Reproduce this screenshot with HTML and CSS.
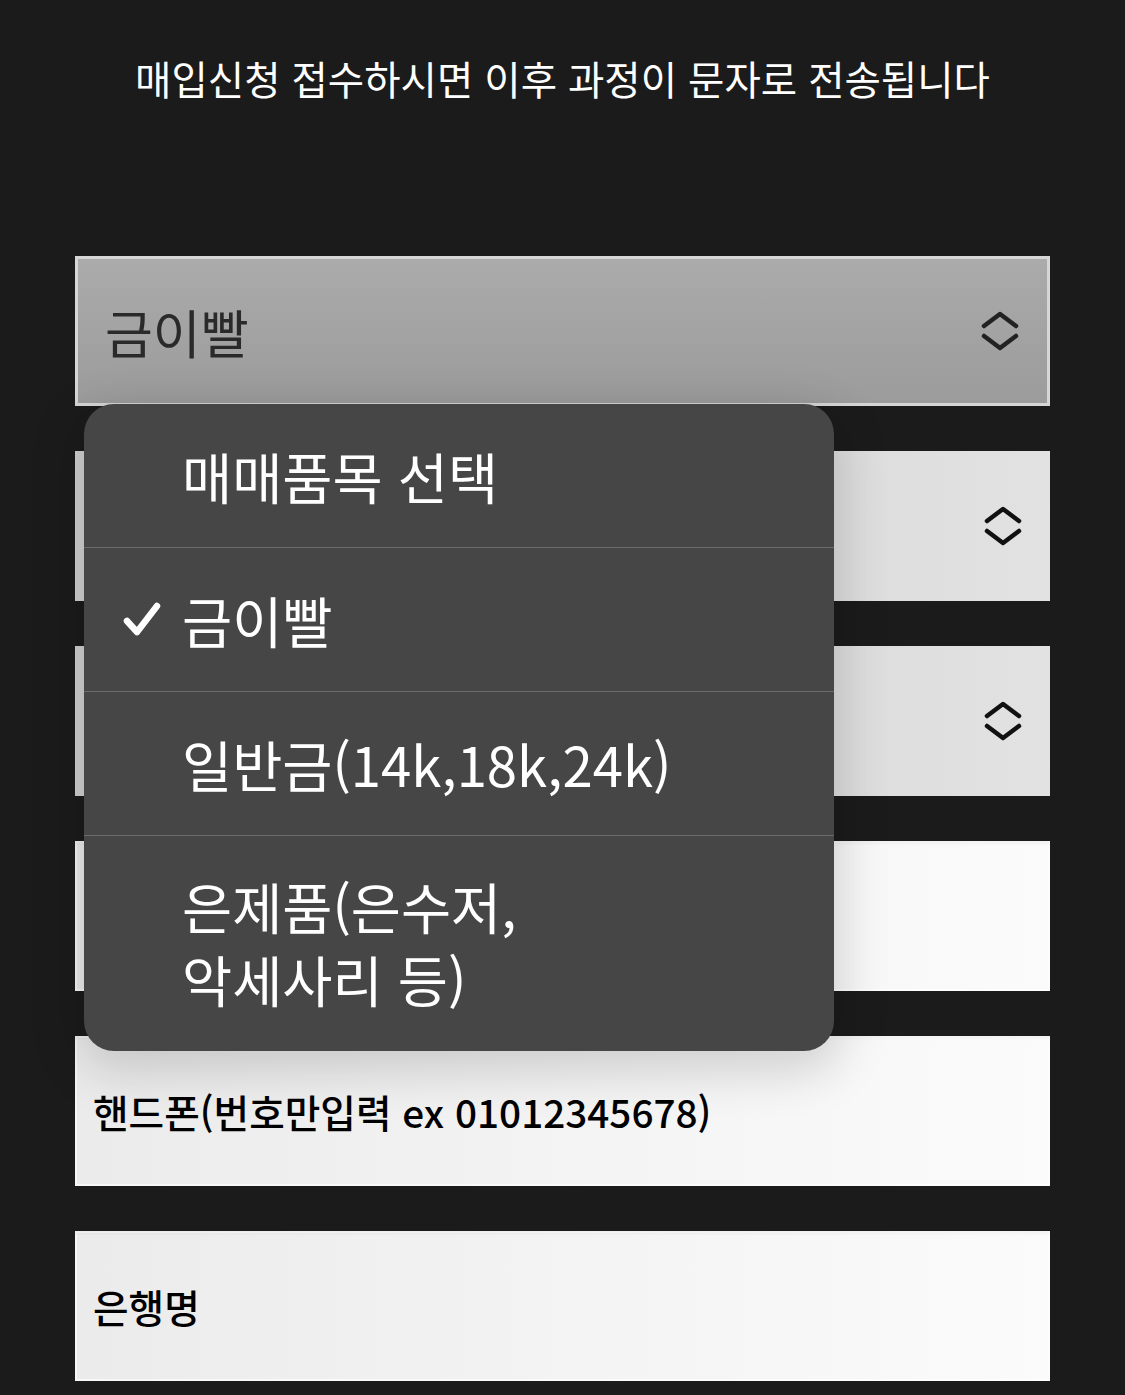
FILE: index.html
```html
<!DOCTYPE html>
<html lang="ko">
<head>
<meta charset="utf-8">
<title>매입신청</title>
<link rel="stylesheet" href="styles.css">
</head>
<body>
<div class="page">
  <p class="notice">매입신청 접수하시면 이후 과정이 문자로 전송됩니다</p>
  <form class="form">
    <div class="field select active">
      <span class="value">금이빨</span>
      <svg class="chev" viewBox="0 0 40 44" width="40" height="44"><path d="M4 17 L20 5 L36 17 M4 27 L20 39 L36 27" fill="none" stroke="#222" stroke-width="4.5" stroke-linecap="round" stroke-linejoin="round"/></svg>
    </div>
    <div class="field select">
      <span class="value"></span>
      <svg class="chev" viewBox="0 0 40 44" width="40" height="44"><path d="M4 17 L20 5 L36 17 M4 27 L20 39 L36 27" fill="none" stroke="#111" stroke-width="4.5" stroke-linecap="round" stroke-linejoin="round"/></svg>
    </div>
    <div class="field select">
      <span class="value"></span>
      <svg class="chev" viewBox="0 0 40 44" width="40" height="44"><path d="M4 17 L20 5 L36 17 M4 27 L20 39 L36 27" fill="none" stroke="#111" stroke-width="4.5" stroke-linecap="round" stroke-linejoin="round"/></svg>
    </div>
    <div class="field input"><span class="ph"></span></div>
    <div class="field input"><span class="ph">핸드폰(번호만입력 ex 01012345678)</span></div>
    <div class="field input"><span class="ph">은행명</span></div>

    <ul class="menu">
      <li class="opt">매매품목 선택</li>
      <li class="opt checked">
        <svg class="check" viewBox="0 0 40 40" width="40" height="40"><path d="M5 22 L15 33 L35 7" fill="none" stroke="#fff" stroke-width="6.5" stroke-linecap="round" stroke-linejoin="round"/></svg>
        금이빨
      </li>
      <li class="opt">일반금(14k,18k,24k)</li>
      <li class="opt tall">은제품(은수저,<br>악세사리 등)</li>
    </ul>
  </form>
</div>
</body>
</html>
```

FILE: styles.css
```css
html, body {
  margin: 0;
  padding: 0;
}
body {
  background: #1b1b1b;
  font-family: "Noto Sans CJK KR", "Noto Sans", sans-serif;
  width: 1125px;
  height: 1395px;
  overflow: hidden;
}
.page {
  padding-top: 54px;
}
.notice {
  margin: 0;
  text-align: center;
  color: #fff;
  font-size: 39.5px;
  line-height: 48px;
  font-weight: 400;
}
.form {
  position: relative;
  margin: 154px 0 0 75px;
  width: 975px;
  display: flex;
  flex-direction: column;
  gap: 45px;
}
.field {
  box-sizing: border-box;
  height: 150px;
  display: flex;
  align-items: center;
}
.select {
  padding: 0 28px 0 28px;
  justify-content: space-between;
  background: linear-gradient(90deg, #cfcfcf 0%, #d9d9d9 60%, #e2e2e2 100%);
}
.select.active {
  border: 3px solid #d6d6d6;
  background: linear-gradient(180deg, #ababab 0%, #a3a3a3 50%, #9c9c9c 100%);
  padding-left: 27px;
}
.value {
  font-size: 52px;
  color: #2a2a2a;
}
.chev {
  display: block;
  margin-right: -1px;
}
.input {
  padding-left: 18px;
  background: linear-gradient(90deg, #ebebeb 0%, #f4f4f4 55%, #fbfbfb 100%);
  box-shadow: inset 0 4px 4px -2px rgba(0,0,0,0.06), inset 0 0 0 2px rgba(255,255,255,0.6);
}
.ph {
  font-size: 38.7px;
  font-weight: 500;
  color: #000;
}
.menu {
  position: absolute;
  left: 9px;
  top: 148px;
  width: 750px;
  margin: 0;
  padding: 0;
  list-style: none;
  background: #464646;
  border-radius: 30px;
  box-shadow: 0 14px 50px 6px rgba(0,0,0,0.16);
  overflow: hidden;
}
.opt {
  position: relative;
  box-sizing: border-box;
  height: 144px;
  padding-left: 98px;
  display: flex;
  align-items: center;
  color: #fff;
  font-size: 54.5px;
  border-top: 1px solid #6b6b6b;
}
.opt:first-child {
  border-top: none;
  height: 143px;
}
.opt.tall {
  height: 216px;
  line-height: 73px;
  padding-bottom: 4px;
}
.check {
  position: absolute;
  left: 38px;
  top: 51px;
}
```
